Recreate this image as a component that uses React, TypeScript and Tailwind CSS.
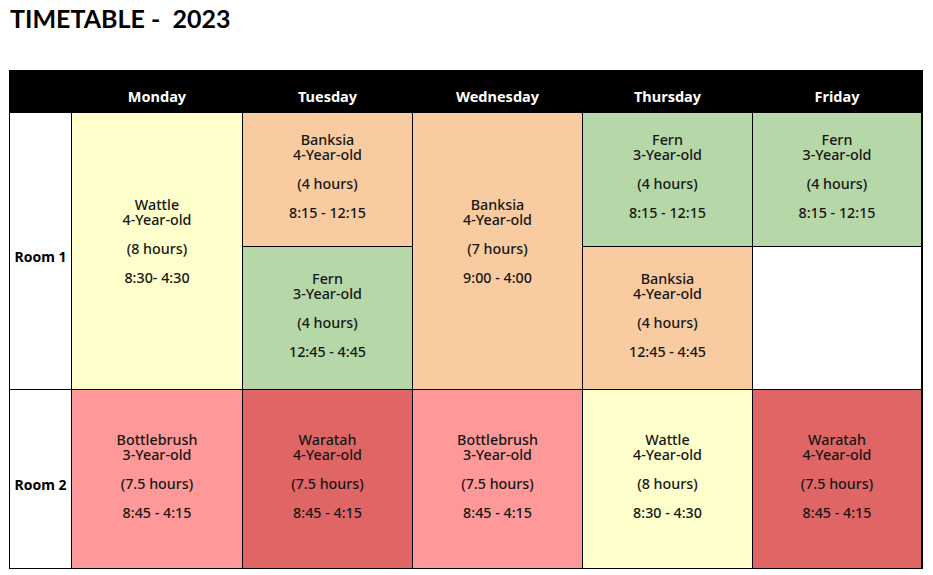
// Weekly room timetable, spreadsheet-style grid

type Slot = {
  name: string
  age: string
  hours: string
  time: string
  bg: string
  pos: string // grid placement classes
  pad?: string
}

const days = ['Monday', 'Tuesday', 'Wednesday', 'Thursday', 'Friday']
const dayCols = ['col-start-2', 'col-start-3', 'col-start-4', 'col-start-5', 'col-start-6']

const slots: Slot[] = [
  { name: 'Wattle', age: '4-Year-old', hours: '(8 hours)', time: '8:30- 4:30', bg: 'bg-[#ffffcc]', pos: 'col-start-2 row-start-2 row-span-2', pad: 'pb-5' },
  { name: 'Banksia', age: '4-Year-old', hours: '(4 hours)', time: '8:15 - 12:15', bg: 'bg-[#f8cba0]', pos: 'col-start-3 row-start-2', pad: 'pb-2' },
  { name: 'Fern', age: '3-Year-old', hours: '(4 hours)', time: '12:45 - 4:45', bg: 'bg-[#b6d7a8]', pos: 'col-start-3 row-start-3', pad: 'pb-1.5' },
  { name: 'Banksia', age: '4-Year-old', hours: '(7 hours)', time: '9:00 - 4:00', bg: 'bg-[#f8cba0]', pos: 'col-start-4 row-start-2 row-span-2', pad: 'pb-5' },
  { name: 'Fern', age: '3-Year-old', hours: '(4 hours)', time: '8:15 - 12:15', bg: 'bg-[#b6d7a8]', pos: 'col-start-5 row-start-2', pad: 'pb-2' },
  { name: 'Banksia', age: '4-Year-old', hours: '(4 hours)', time: '12:45 - 4:45', bg: 'bg-[#f8cba0]', pos: 'col-start-5 row-start-3', pad: 'pb-1.5' },
  { name: 'Fern', age: '3-Year-old', hours: '(4 hours)', time: '8:15 - 12:15', bg: 'bg-[#b6d7a8]', pos: 'col-start-6 row-start-2', pad: 'pb-2' },
  { name: 'Bottlebrush', age: '3-Year-old', hours: '(7.5 hours)', time: '8:45 - 4:15', bg: 'bg-[#ff9999]', pos: 'col-start-2 row-start-4', pad: 'pb-1.5' },
  { name: 'Waratah', age: '4-Year-old', hours: '(7.5 hours)', time: '8:45 - 4:15', bg: 'bg-[#e06666]', pos: 'col-start-3 row-start-4', pad: 'pb-1.5' },
  { name: 'Bottlebrush', age: '3-Year-old', hours: '(7.5 hours)', time: '8:45 - 4:15', bg: 'bg-[#ff9999]', pos: 'col-start-4 row-start-4', pad: 'pb-1.5' },
  { name: 'Wattle', age: '4-Year-old', hours: '(8 hours)', time: '8:30 - 4:30', bg: 'bg-[#ffffcc]', pos: 'col-start-5 row-start-4', pad: 'pb-1.5' },
  { name: 'Waratah', age: '4-Year-old', hours: '(7.5 hours)', time: '8:45 - 4:15', bg: 'bg-[#e06666]', pos: 'col-start-6 row-start-4', pad: 'pb-1.5' },
]

function SlotCell({ s }: { s: Slot }) {
  return (
    <div className={`${s.pos} ${s.bg} ${s.pad ?? ''} flex flex-col items-center justify-center text-center text-[14.3px] leading-[15px] font-medium text-[#161616]`}>
      <p>
        {s.name}
        <br />
        {s.age}
      </p>
      <p className="mt-[14px]">{s.hours}</p>
      <p className="mt-[14px]">{s.time}</p>
    </div>
  )
}

export default function App() {
  return (
    <div className="w-[933px] h-[575px] bg-white pl-[9px] pt-[3px]" style={{ fontFamily: '"Noto Sans", Lato, sans-serif' }}>
      <h1 className="text-[25px] font-bold leading-[30px] text-black pl-px whitespace-pre" style={{ fontFamily: 'Lato, sans-serif' }}>
        TIMETABLE -  2023
      </h1>

      <div className="mt-[37px] w-[914px] grid grid-cols-[61px_170px_169px_169px_169px_168px] grid-rows-[41px_133px_142px_178px] gap-px p-px bg-black">
        <div className="col-start-1 row-start-1 bg-black" />
        {days.map((d, i) => (
          <div key={d} className={`${dayCols[i]} row-start-1 bg-black flex items-end justify-center pb-[8px] text-white font-bold text-[14.5px] leading-4`}>
            {d}
          </div>
        ))}

        <div className="col-start-1 row-start-2 row-span-2 bg-white flex items-center justify-center pt-[10px] font-bold text-[14px]">
          Room 1
        </div>
        <div className="col-start-1 row-start-4 bg-white flex items-center justify-center pt-[10px] font-bold text-[14px]">
          Room 2
        </div>

        {slots.map((s, i) => (
          <SlotCell key={i} s={s} />
        ))}

        <div className="col-start-6 row-start-3 bg-white" />
      </div>
    </div>
  )
}
